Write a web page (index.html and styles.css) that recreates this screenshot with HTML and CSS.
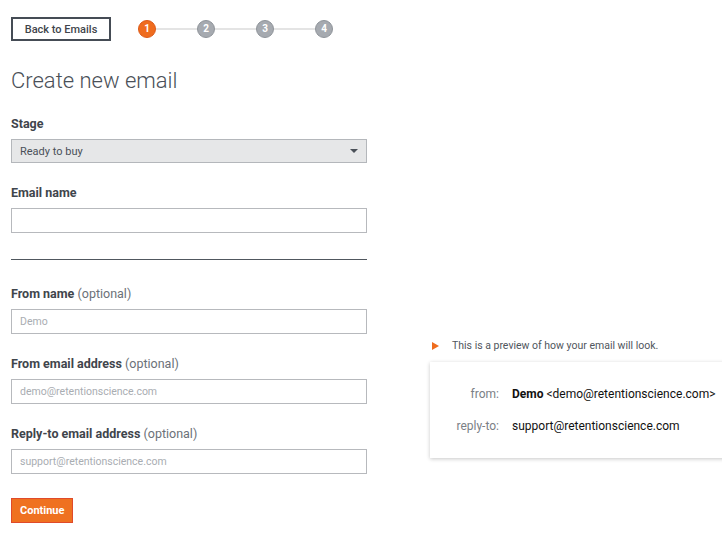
FILE: index.html
```html
<!DOCTYPE html>
<html lang="en">
<head>
    <meta charset="UTF-8">
    <meta name="viewport" content="width=device-width, initial-scale=1.0">
    <title>Create new email</title>
    <link rel="stylesheet" href="styles.css">
</head>
<body>
    <div class="page">
        <main class="form-col">
            <div class="topbar">
                <button class="back-btn">Back to Emails</button>
                <ol class="steps">
                    <li class="step active">1</li>
                    <li class="step-line"></li>
                    <li class="step">2</li>
                    <li class="step-line"></li>
                    <li class="step">3</li>
                    <li class="step-line"></li>
                    <li class="step">4</li>
                </ol>
            </div>

            <h1 class="title">Create new email</h1>

            <div class="field">
                <label for="stage">Stage</label>
                <div class="select">
                    <span>Ready to buy</span>
                    <span class="caret"></span>
                </div>
            </div>
            <div class="field">
                <label for="email-name">Email name</label>
                <input type="text" id="email-name">
            </div>

            <hr class="divider">

            <div class="field">
                <label for="from-name">From name <span class="opt">(optional)</span></label>
                <input type="text" id="from-name" placeholder="Demo">
            </div>
            <div class="field">
                <label for="from-email">From email address <span class="opt">(optional)</span></label>
                <input type="text" id="from-email" placeholder="demo@retentionscience.com">
            </div>
            <div class="field">
                <label for="reply-to">Reply-to email address <span class="opt">(optional)</span></label>
                <input type="text" id="reply-to" placeholder="support@retentionscience.com">
            </div>

            <button class="continue-btn">Continue</button>
        </main>

        <aside class="preview">
            <p class="preview-note"><span class="arrow"></span>This is a preview of how your email will look.</p>
            <div class="preview-card">
                <span class="key">from:</span>
                <span class="val"><b>Demo</b> &lt;demo@retentionscience.com&gt;</span>
                <span class="key">reply-to:</span>
                <span class="val">support@retentionscience.com</span>
            </div>
        </aside>
    </div>
</body>
</html>
```

FILE: styles.css
```css
body {
    margin: 0;
    padding: 0;
    font-family: 'Roboto', 'Liberation Sans', sans-serif;
    color: #3f454c;
    background: #fff;
    overflow: hidden;
}
.page {
    display: flex;
    padding: 17px 0 0 11px;
}
.form-col {
    width: 356px;
    flex: none;
}
.topbar {
    display: flex;
    align-items: center;
    height: 24px;
}
.back-btn {
    width: 100px;
    height: 24px;
    border: 2px solid #454c55;
    background: #fff;
    font-family: inherit;
    font-size: 11px;
    font-weight: 500;
    color: #3f454c;
    padding: 0;
    cursor: pointer;
}
.steps {
    display: flex;
    align-items: center;
    list-style: none;
    margin: 0 0 0 27px;
    padding: 0;
}
.step {
    width: 18px;
    height: 18px;
    box-sizing: border-box;
    border-radius: 50%;
    background: #a6aab0;
    border: 1px solid #8f949a;
    color: #fff;
    font-size: 10px;
    font-weight: 700;
    text-align: center;
    line-height: 16px;
}
.step.active {
    background: #ef6c1e;
    border-color: #dd5a18;
}
.step-line {
    width: 41px;
    height: 2px;
    background: #e4e4e4;
}
.title {
    margin: 27px 0 0;
    font-size: 22px;
    font-weight: 300;
    line-height: 26px;
    color: #4a5058;
}
.field {
    margin-top: 22px;
}
.divider + .field {
    margin-top: 26px;
}
.field label {
    display: block;
    font-size: 12.5px;
    font-weight: 700;
    line-height: 16px;
    margin-bottom: 7px;
    color: #3f454c;
}
.field .opt {
    font-weight: 400;
    color: #6b7178;
}
.select {
    display: flex;
    align-items: center;
    justify-content: space-between;
    height: 24px;
    box-sizing: border-box;
    padding: 0 8px 0 8px;
    background: #e6e7e8;
    border: 1px solid #b4b7bb;
    font-size: 11px;
    color: #4a5058;
}
.caret {
    width: 0;
    height: 0;
    border-left: 4px solid transparent;
    border-right: 4px solid transparent;
    border-top: 4px solid #4a5058;
}
input {
    display: block;
    width: 100%;
    height: 25px;
    box-sizing: border-box;
    border: 1px solid #b7b9bd;
    padding: 0 8px;
    font-family: inherit;
    font-size: 10.5px;
    color: #3f454c;
    outline: none;
}
input::placeholder {
    color: #a9adb2;
}
.divider {
    margin: 26px 0 0;
    border: 0;
    border-top: 1px solid #50575e;
}
.continue-btn {
    display: block;
    margin-top: 24px;
    height: 25px;
    padding: 0 8px;
    background: #ef7120;
    border: 1px solid #e04a2a;
    color: #fff;
    font-family: inherit;
    font-size: 11px;
    font-weight: 700;
    cursor: pointer;
}
.preview {
    margin-left: 63px;
    padding-top: 322px;
    flex: none;
    width: 320px;
}
.preview-note {
    display: flex;
    align-items: center;
    margin: 0;
    font-size: 10.5px;
    line-height: 14px;
    color: #50565d;
}
.arrow {
    width: 0;
    height: 0;
    margin: 0 13px 0 2px;
    border-top: 4.5px solid transparent;
    border-bottom: 4.5px solid transparent;
    border-left: 7px solid #ef6c1e;
}
.preview-card {
    margin-top: 9px;
    height: 96px;
    box-sizing: border-box;
    padding-top: 24px;
    display: grid;
    grid-template-columns: 69px 1fr;
    column-gap: 13px;
    row-gap: 16px;
    align-content: start;
    background: #fff;
    box-shadow: 0 1px 4px rgba(0, 0, 0, 0.22);
    font-size: 12px;
    line-height: 16px;
}
.key {
    text-align: right;
    color: #7b8086;
}
.val {
    color: #111;
}
.val b {
    font-weight: 700;
}
```
